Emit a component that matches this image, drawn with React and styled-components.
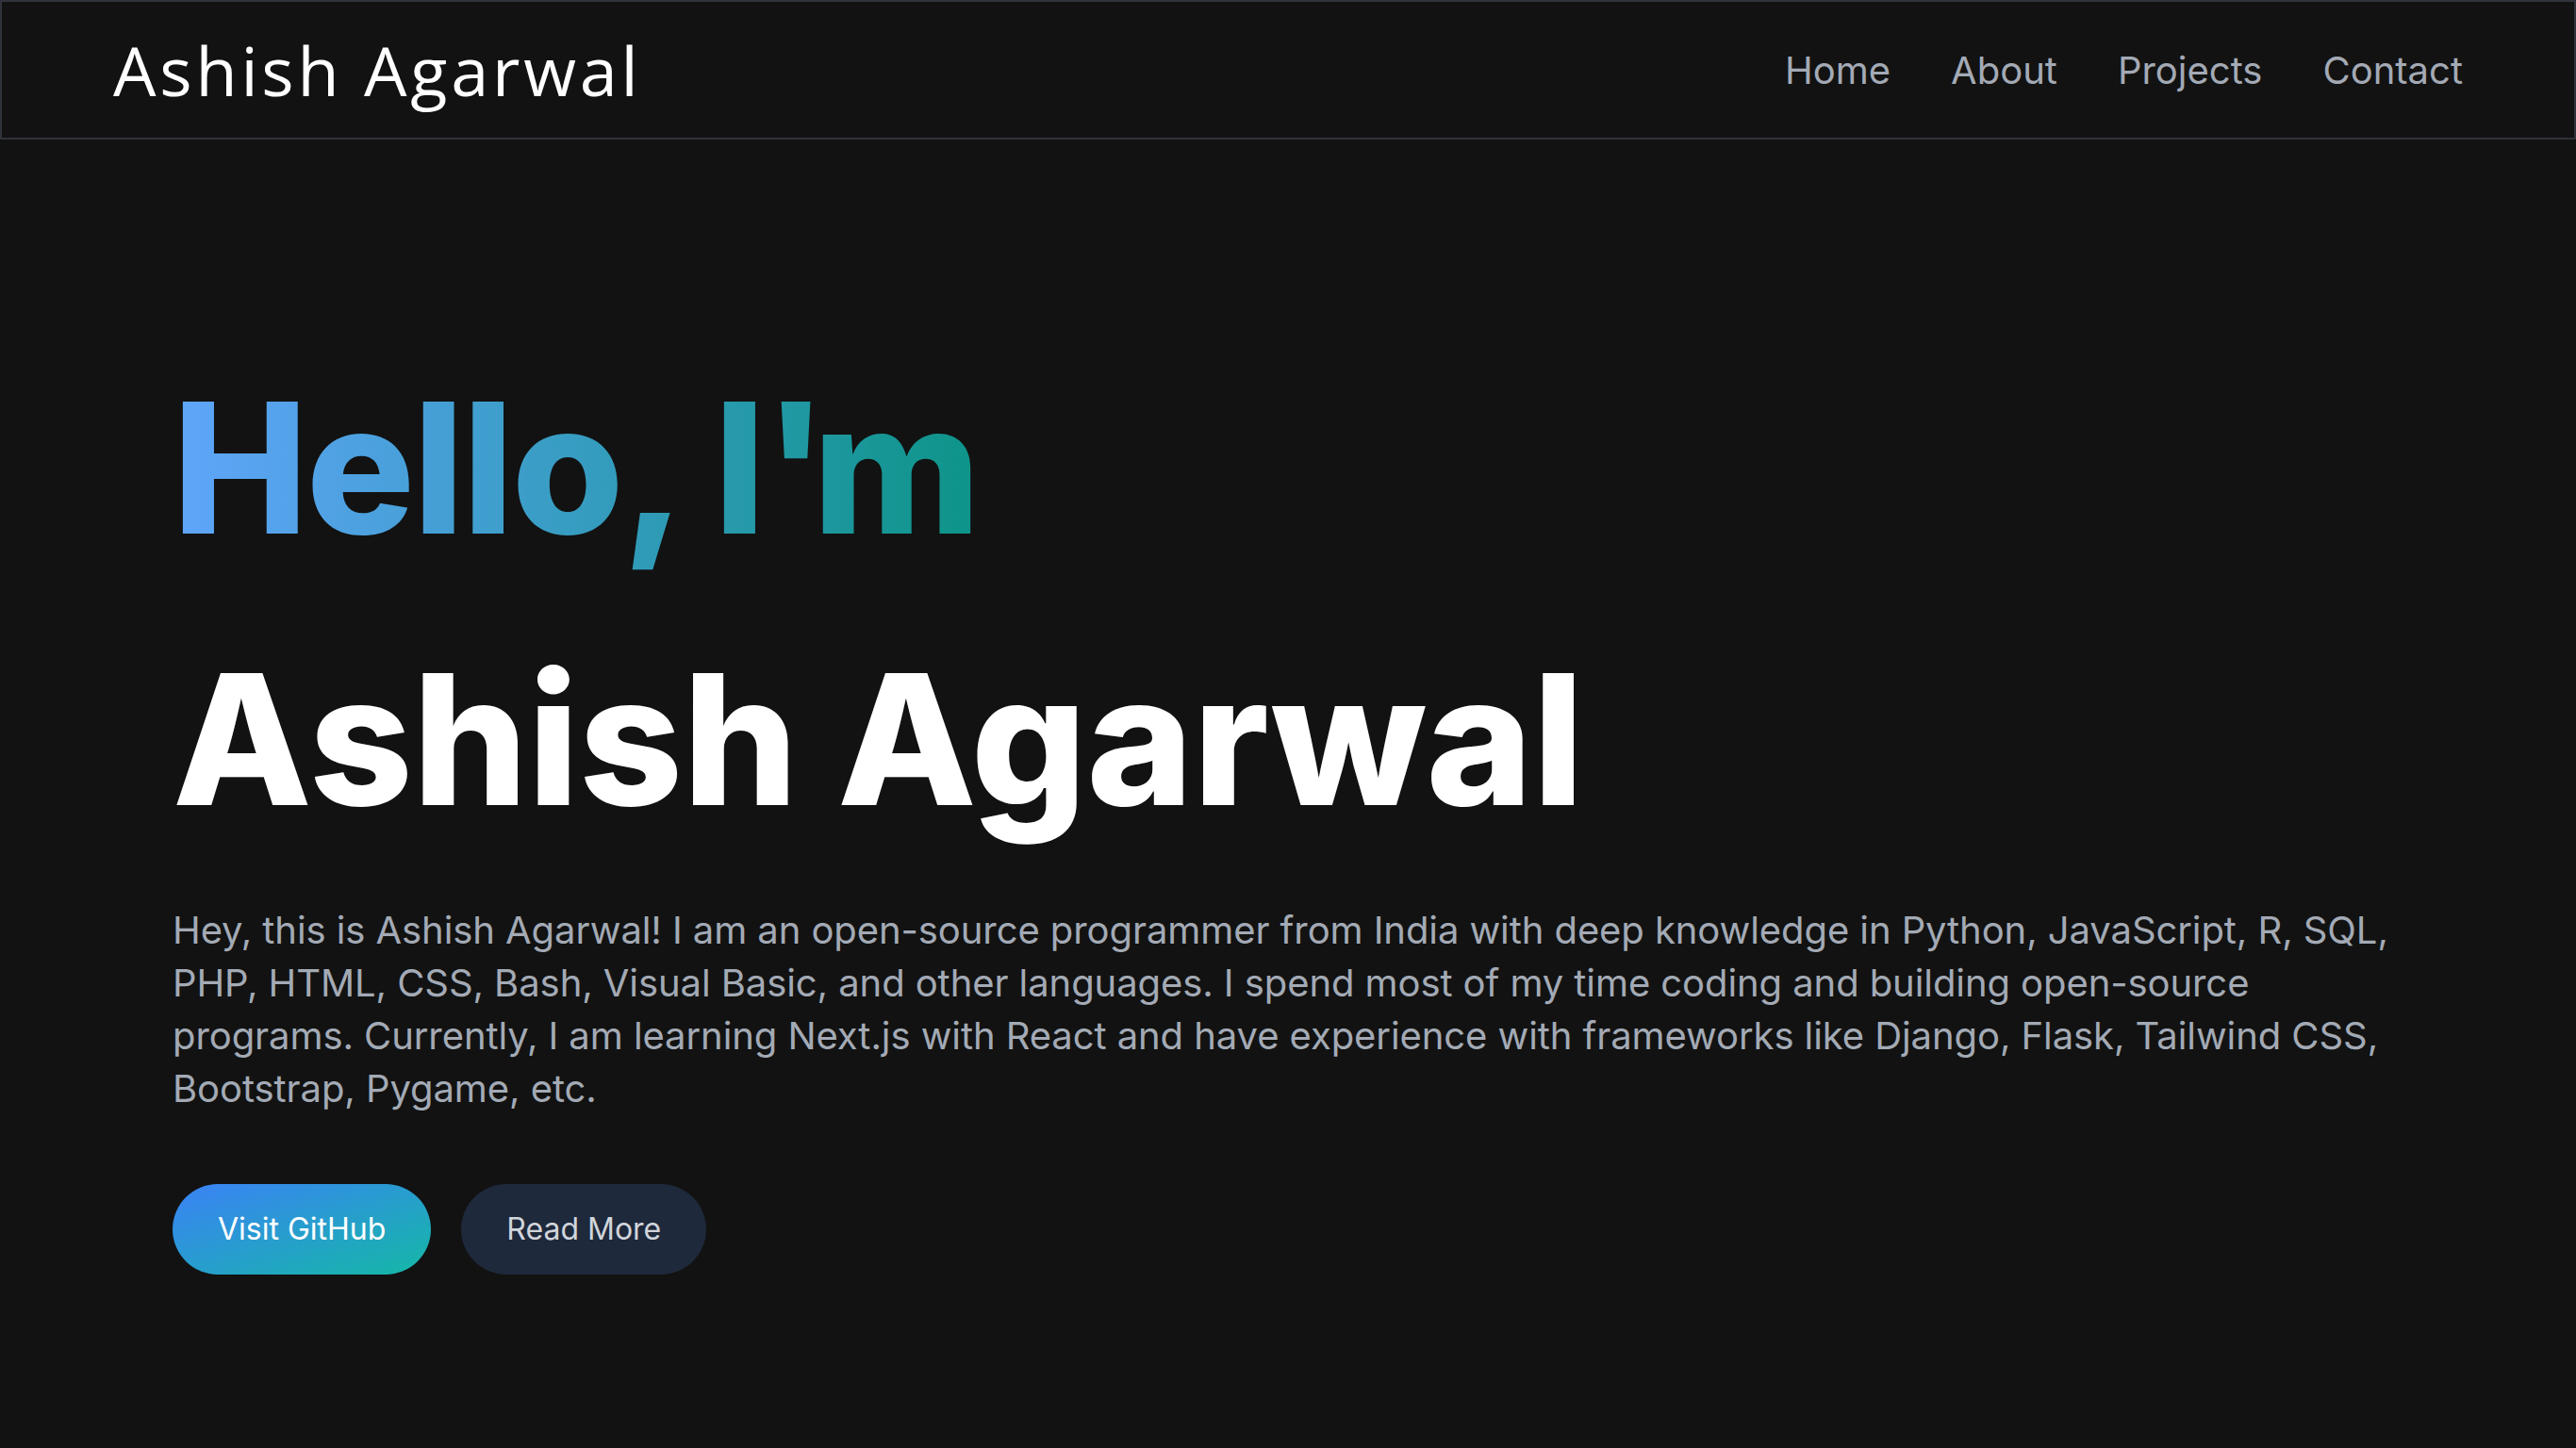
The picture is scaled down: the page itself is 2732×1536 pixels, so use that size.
import React from 'react';
import styled, { createGlobalStyle } from 'styled-components';

const GlobalStyle = createGlobalStyle`
        html, body {
                margin: 0;
                padding: 0;
                background-color: #121212;
        }
        body {
                font-family: Inter, "Noto Sans", sans-serif;
                min-height: 100vh;
        }
        * {
                box-sizing: border-box;
        }
`

const Header = styled.header`
        height: 148px;
        border: 2px solid #30333b;
        background-color: #121212;
        display: flex;
        align-items: center;
        justify-content: space-between;
        padding: 0 118px;
`

const Logo = styled.div`
        font-family: "Open Sans", Inter, sans-serif;
        font-weight: 500;
        font-size: 72px;
        color: #ffffff;
        letter-spacing: 3.8px;
`

const Nav = styled.nav`
        display: flex;
        gap: 64px;
`

const NavLink = styled.a`
        font-size: 40px;
        color: #a3aab5;
        text-decoration: none;
        cursor: pointer;
`

const Hero = styled.section`
        padding: 204px 183px 0;
`

const Heading = styled.h1`
        margin: 0 0 31px;
        font-size: 192px;
        line-height: 288px;
        font-weight: 800;
        color: #ffffff;
        letter-spacing: 0;
`

// the greeting sits a little tighter than the name
const Gradient = styled.span`
        letter-spacing: -2px;
        background: linear-gradient(to right, #60a5fa, #0d9488);
        -webkit-background-clip: text;
        background-clip: text;
        color: transparent;
`

const Apostrophe = styled.span`
        letter-spacing: -16px;
`

const Intro = styled.p`
        margin: 0;
        font-size: 40px;
        line-height: 56px;
        color: #a3aab5;
        letter-spacing: -0.08px;
`

const Buttons = styled.div`
        display: flex;
        gap: 32px;
        margin-top: 73px;
`

const Button = styled.a`
        display: inline-block;
        padding: 24px 48px;
        border-radius: 9999px;
        font-size: 32px;
        line-height: 48px;
        text-decoration: none;
        cursor: pointer;
        color: ${props => props.primary ? '#ffffff' : '#d1d5db'};
        background: ${props => props.primary
                ? 'linear-gradient(to bottom right, #3b82f6, #14b8a6)'
                : '#1e293b'};
`

const App = () => {
        return (
                <>
                        <GlobalStyle />
                        <Header>
                                <Logo>Ashish Agarwal</Logo>
                                <Nav>
                                        <NavLink>Home</NavLink>
                                        <NavLink>About</NavLink>
                                        <NavLink>Projects</NavLink>
                                        <NavLink>Contact</NavLink>
                                </Nav>
                        </Header>
                        <Hero>
                                <Heading>
                                        <Gradient>Hello, I<Apostrophe>'</Apostrophe>m</Gradient>
                                        <br />
                                        Ashish Agarwal
                                </Heading>
                                <Intro>
                                        Hey, this is Ashish Agarwal! I am an open-source programmer from India with deep knowledge in Python, JavaScript, R, SQL, PHP, HTML, CSS, Bash, Visual Basic, and other languages. I spend most of my time coding and building open-source programs. Currently, I am learning Next.js with React and have experience with frameworks like Django, Flask, Tailwind CSS, Bootstrap, Pygame, etc.
                                </Intro>
                                <Buttons>
                                        <Button primary>Visit GitHub</Button>
                                        <Button>Read More</Button>
                                </Buttons>
                        </Hero>
                </>
        )
}

export default App;
